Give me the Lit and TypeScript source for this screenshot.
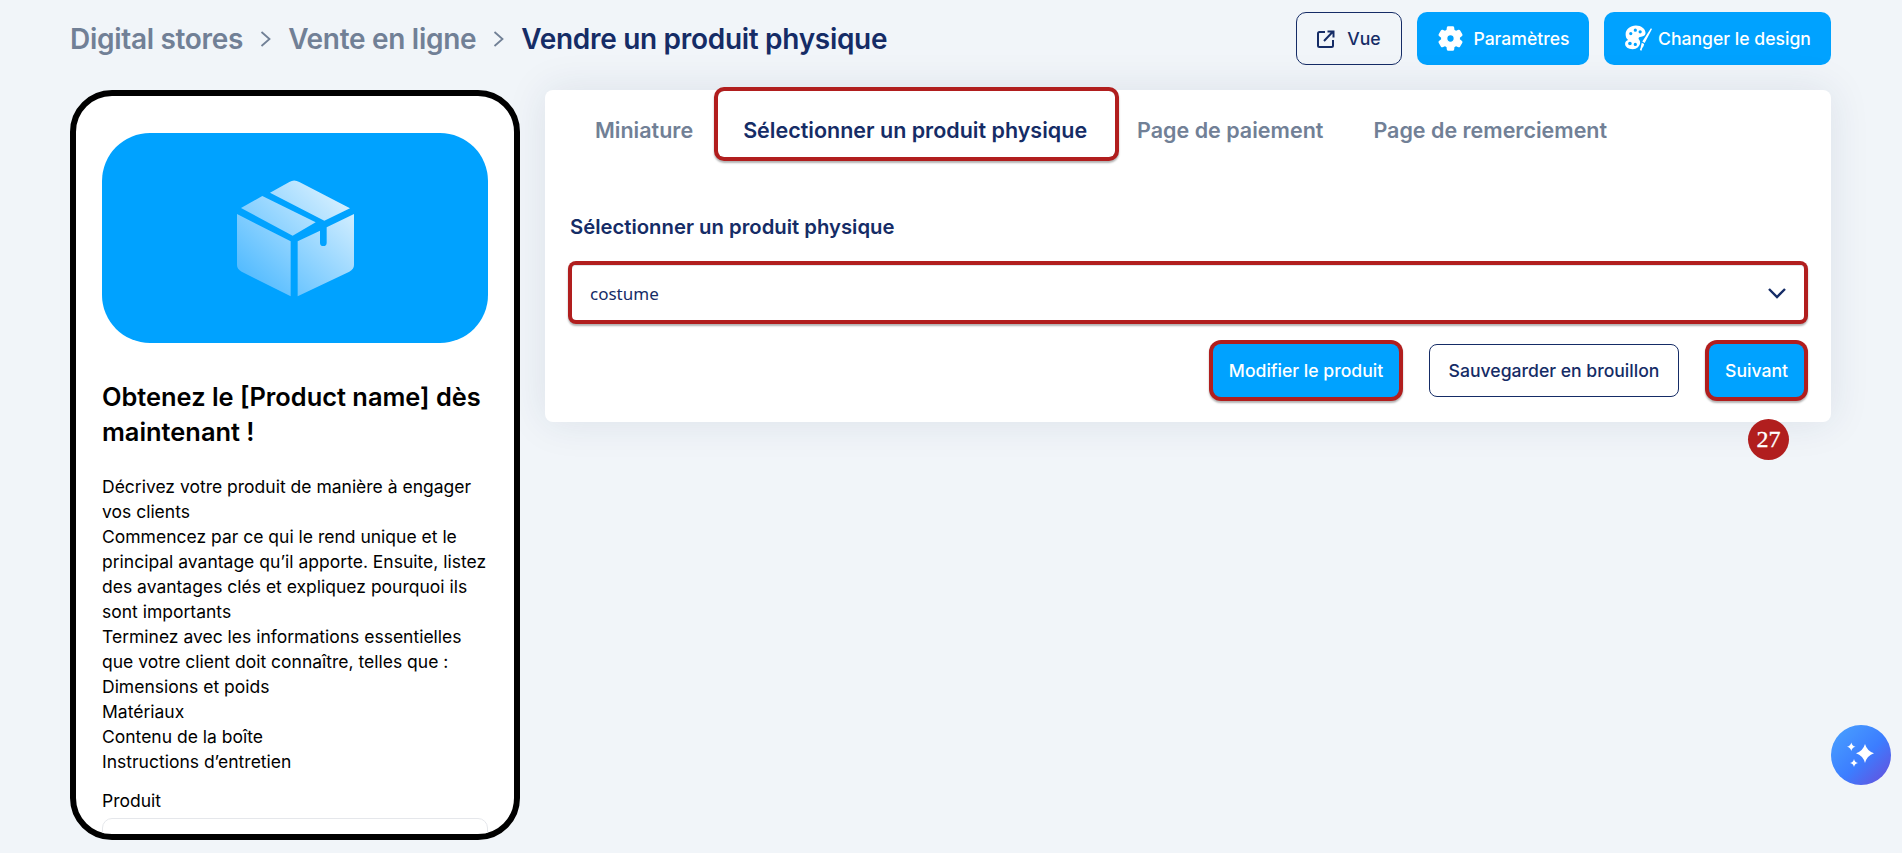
import { LitElement, html, css } from 'lit';
import { customElement } from 'lit/decorators.js';

@customElement('app-root')
export class AppRoot extends LitElement {
  static styles = css`
    :host {
      display: block;
      font-family: "Inter", "Liberation Sans", sans-serif;
      color: #152c66;
    }
    .page {
      position: relative;
      box-sizing: border-box;
      height: 853px;
      overflow: hidden;
      padding: 12px 71px 0 70px;
      background: #f1f5f9;
    }
    header {
      display: flex;
      justify-content: space-between;
      align-items: center;
      height: 53px;
    }
    .crumbs {
      display: flex;
      align-items: center;
      gap: 17px;
      font-size: 28px;
      font-weight: 600;
      letter-spacing: -0.3px;
      color: #718096;
    }
    .crumbs .current { color: #152c66; }
    .crumbs svg { display: block; }
    .head-actions { display: flex; gap: 15px; }
    .btn {
      box-sizing: border-box;
      display: flex;
      align-items: center;
      justify-content: center;
      height: 53px;
      border-radius: 10px;
      font-size: 17.6px;
      font-weight: 500;
      background: #00a2ff;
      color: #fff;
    }
    .btn.outline {
      background: transparent;
      border: 1px solid #152c66;
      color: #152c66;
    }
    .head-actions .view { width: 106px; gap: 12px; }
    .head-actions .settings { width: 172px; gap: 8px; }
    .head-actions .design { width: 227px; gap: 6px; }
    main {
      display: flex;
      align-items: flex-start;
      gap: 25px;
      margin-top: 25px;
    }
    .phone {
      box-sizing: border-box;
      flex: none;
      width: 450px;
      height: 750px;
      overflow: hidden;
      padding: 37px 26px 0;
      border: 6px solid #000;
      border-radius: 42px;
      background: #fff;
      color: #000;
    }
    .cover {
      display: flex;
      align-items: center;
      justify-content: center;
      height: 210px;
      border-radius: 48px;
      background: #00a2ff;
    }
    .phone h2 {
      margin: 36px 0 0;
      font-size: 25.4px;
      line-height: 35px;
      font-weight: 600;
    }
    .phone p {
      margin: 25px 0 0;
      font-size: 17.5px;
      line-height: 25px;
    }
    .phone .field-label {
      margin-top: 14px;
      font-size: 17.5px;
      line-height: 25px;
    }
    .phone .field {
      height: 60px;
      margin-top: 5px;
      border: 1px solid #e5e7eb;
      border-radius: 10px;
    }
    .card {
      position: relative;
      box-sizing: border-box;
      flex: 1;
      height: 332px;
      padding: 1px 25px 25px;
      border-radius: 8px;
      background: #fff;
      box-shadow: 0 0 40px rgba(30, 50, 90, 0.1);
    }
    .tabs { display: flex; }
    .tab {
      box-sizing: border-box;
      display: flex;
      align-items: center;
      height: 66px;
      padding: 12px 25px 0;
      font-size: 21.5px;
      font-weight: 600;
      white-space: nowrap;
      color: #718096;
    }
    .tab.active {
      margin-right: -3px;
      padding-right: 28px;
      color: #152c66;
      border-radius: 6px;
    }
    .marked {
      box-shadow: 0 0 0 4px #b11e1e, 0 2px 2px 4px rgba(0, 0, 0, 0.3);
    }
    .label {
      margin-top: 56px;
      font-size: 20.3px;
      line-height: 28px;
      font-weight: 600;
      color: #152c66;
    }
    .select {
      display: flex;
      align-items: center;
      justify-content: space-between;
      box-sizing: border-box;
      height: 55px;
      margin: 24px 2px 0;
      padding: 0 17px 0 18px;
      border-top: 1px solid #e2e5ea;
      border-radius: 4px;
      font-family: "Noto Sans", sans-serif;
      font-size: 17px;
      color: #152c66;
    }
    .actions {
      display: flex;
      justify-content: flex-end;
      align-items: center;
      gap: 30px;
      margin: 24px 2px 0;
    }
    .actions .btn { border-radius: 8px; }
    .actions .edit { width: 186px; }
    .actions .draft { width: 250px; }
    .actions .next { width: 95px; }
    .badge {
      position: absolute;
      right: 42px;
      bottom: -38px;
      display: flex;
      align-items: center;
      justify-content: center;
      width: 41px;
      height: 41px;
      border-radius: 50%;
      background: #b11e1e;
      color: #fff;
      font-family: "Liberation Serif", serif;
      font-size: 24px;
      -webkit-text-stroke: 0.3px #fff;
    }
    .ai {
      position: absolute;
      left: 1831px;
      top: 725px;
      width: 60px;
      height: 60px;
      border-radius: 50%;
      background: linear-gradient(135deg, #4aa3ff 0%, #3c7dff 55%, #6b4bd8 100%);
    }
    .ai svg { display: block; }
  `;

  chevron() {
    return html`<svg width="11" height="16" viewBox="0 0 11 16" fill="none" stroke="#718096" stroke-width="1.8"><path d="M1.5 1l8 7-8 7"/></svg>`;
  }

  render() {
    return html`
      <div class="page">
        <header>
          <div class="crumbs">
            <span>Digital stores</span>
            ${this.chevron()}
            <span>Vente en ligne</span>
            ${this.chevron()}
            <span class="current">Vendre un produit physique</span>
          </div>
          <div class="head-actions">
            <div class="btn outline view">
              <svg width="18" height="18" viewBox="0 0 18 18" fill="none" stroke="#152c66" stroke-width="2"><path d="M8 2H2.5A1.5 1.5 0 0 0 1 3.500v12A1.500 1.500 0 0 0 2.500 17h12a1.500 1.500 0 0 0 1.500-1.500V10"/><path d="M7 11l9-9.500M10.500 1.500H16.500V7.500"/></svg>
              Vue
            </div>
            <div class="btn settings">
              <svg width="29" height="29" viewBox="0 0 24 24" fill="#fff" stroke="#fff" stroke-width="1.2" stroke-linejoin="round"><path fill-rule="evenodd" d="M19.140 12.940c.04-.3.06-.61.06-.94 0-.32-.02-.64-.07-.94l2.030-1.580c.18-.14.23-.41.12-.61l-1.920-3.320c-.12-.22-.37-.29-.59-.22l-2.390.96c-.5-.38-1.030-.7-1.620-.94l-.36-2.540c-.04-.24-.24-.41-.48-.41h-3.840c-.24 0-.43.17-.47.41l-.36 2.540c-.59.24-1.130.57-1.620.94l-2.390-.96c-.22-.08-.47 0-.59.22L2.740 8.870c-.12.21-.08.47.12.61l2.030 1.580c-.05.3-.09.63-.09.94s.02.64.07.94l-2.030 1.580c-.18.14-.23.41-.12.61l1.920 3.320c.12.22.37.29.59.22l2.390-.96c.5.38 1.030.7 1.620.94l.36 2.540c.05.24.24.41.48.41h3.840c.24 0 .44-.17.47-.41l.36-2.540c.59-.24 1.130-.56 1.620-.94l2.390.96c.22.08.47 0 .59-.22l1.920-3.320c.12-.22.07-.47-.12-.61l-2.010-1.580zM12 15.200a3.200 3.200 0 1 1 0-6.400 3.200 3.200 0 0 1 0 6.400z"/></svg>
              Paramètres
            </div>
            <div class="btn design">
              <svg width="28" height="28" viewBox="0 0 26 26" fill="#fff"><path fill-rule="evenodd" d="M11 .5c5 0 9 3 9 7 0 1.500-.8 2.500-2.500 3-2 .6-4 .6-4 2 0 1 1.500 1.500 1.500 3.500 0 3.500-3 6.500-7 6.500-4 0-7-2-7-5 0-2 1.500-3 2.800-3.500C2 12.500 1.500 10.500 1.500 8.500 1.500 4 6 .5 11 .5zM10.500 3.300a1.500 1.500 0 1 0 0 3 1.500 1.500 0 0 0 0-3zM15 4.800a1.500 1.500 0 1 0 0 3 1.500 1.500 0 0 0 0-3zM6.300 6.500a1.500 1.500 0 1 0 0 3 1.500 1.500 0 0 0 0-3zM5.500 15.500a1.700 1.700 0 1 0 0 3.400 1.700 1.700 0 0 0 0-3.400zM10.500 16.500a1.500 1.500 0 1 0 0 3 1.500 1.500 0 0 0 0-3z"/><path d="M25 3l1 .6-6.800 13-2.200-1.200zM16.500 16.500l2.200 1.200c-.2 1.800-1 3-1.800 3.800l-.7 2.500-1.500-.7.8-2.300c.3-1.500.5-3 1-4.500z"/></svg>
              Changer le design
            </div>
          </div>
        </header>
        <main>
          <section class="phone">
            <div class="cover">
              <svg width="150" height="136" viewBox="0 0 450 408">
                <defs>
                  <linearGradient id="box" gradientUnits="userSpaceOnUse" x1="400" y1="60" x2="100" y2="370">
                    <stop offset="0" stop-color="#e2f4ff"/>
                    <stop offset="1" stop-color="#4db9ff"/>
                  </linearGradient>
                </defs>
                <g fill="url(#box)">
                  <path d="M150 68L208 36Q222 27 238 36L390 115L313 152Z"/>
                  <path d="M63 114L127 78L287 157L218 197Z"/>
                  <path d="M51 132L212 214V379L65 305Q51 298 51 285Z"/>
                  <path d="M233 214L300 182V218Q300 228 310 228T320 218V172L402 132V285Q402 298 388 305L233 379Z"/>
                </g>
              </svg>
            </div>
            <h2>Obtenez le [Product name] dès maintenant !</h2>
            <p>
              Décrivez votre produit de manière à engager vos clients<br />
              Commencez par ce qui le rend unique et le principal avantage qu’il apporte. Ensuite, listez des avantages clés et expliquez pourquoi ils sont importants<br />
              Terminez avec les informations essentielles que votre client doit connaître, telles que :<br />
              Dimensions et poids<br />
              Matériaux<br />
              Contenu de la boîte<br />
              Instructions d’entretien
            </p>
            <div class="field-label">Produit</div>
            <div class="field"></div>
          </section>
          <section class="card">
            <div class="tabs">
              <div class="tab">Miniature</div>
              <div class="tab active marked">Sélectionner un produit physique</div>
              <div class="tab">Page de paiement</div>
              <div class="tab">Page de remerciement</div>
            </div>
            <div class="label">Sélectionner un produit physique</div>
            <div class="select marked">
              <span>costume</span>
              <svg width="20" height="12" viewBox="0 0 20 12" fill="none" stroke="#152c66" stroke-width="2.400"><path d="M2 2l8 8 8-8"/></svg>
            </div>
            <div class="actions">
              <div class="btn edit marked">Modifier le produit</div>
              <div class="btn outline draft">Sauvegarder en brouillon</div>
              <div class="btn next marked">Suivant</div>
            </div>
            <div class="badge">27</div>
          </section>
        </main>
        <div class="ai">
          <svg width="60" height="60" viewBox="0 0 60 60" fill="#fff">
            <path d="M34 19Q36 26 43 28.300Q36 30.600 34 38Q32 30.600 25 28.300Q32 26 34 19Z"/>
            <path d="M20.300 17.500Q21 21 24.500 21.700Q21 22.400 20.300 26Q19.600 22.400 16 21.700Q19.600 21 20.300 17.500Z"/>
            <path d="M23 34Q23.700 37.300 27 38Q23.700 38.700 23 42Q22.300 38.700 19 38Q22.300 37.300 23 34Z"/>
          </svg>
        </div>
      </div>
    `;
  }
}
